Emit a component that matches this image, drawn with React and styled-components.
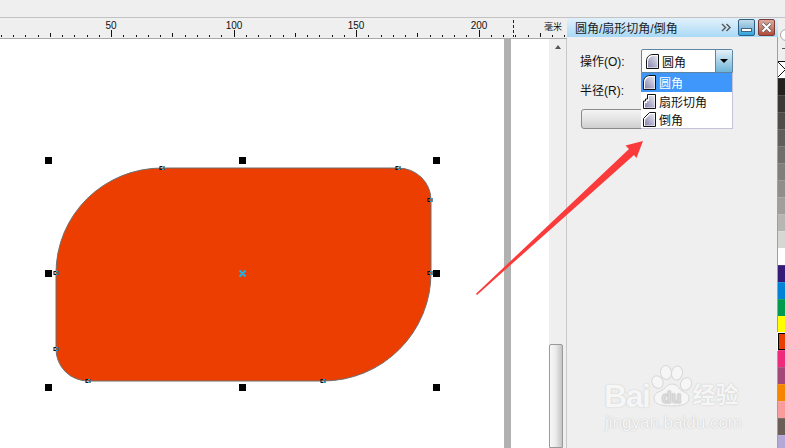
import React from 'react'
import styled, { createGlobalStyle } from 'styled-components'

const GlobalStyle = createGlobalStyle`
  html, body {
    margin: 0;
    padding: 0;
    background: #efefef;
  }
`

const UI_FONT = `"Liberation Sans", "Noto Sans CJK SC", sans-serif`

const Screen = styled.div`
  position: relative;
  width: 785px;
  height: 448px;
  overflow: hidden;
  display: flex;
  flex-direction: column;
  background: #efefef;
  font-family: ${UI_FONT};
  font-size: 12px;
  color: #111;
`

const TopBar = styled.div`
  height: 17px;
  flex-shrink: 0;
  border-bottom: 1px solid #c2c2c2;
`

const Main = styled.div`
  flex: 1;
  display: flex;
  min-height: 0;
`

const Workspace = styled.div`
  width: 567px;
  display: flex;
  flex-direction: column;
  flex-shrink: 0;
`

const RulerBar = styled.div`
  height: 20px;
  flex-shrink: 0;
  border-bottom: 1px solid #a9a9a9;
  svg {
    display: block;
  }
`

const CanvasRow = styled.div`
  flex: 1;
  display: flex;
  min-height: 0;
`

const Canvas = styled.div`
  width: 504px;
  background: #fff;
  svg {
    display: block;
  }
`

const PageEdge = styled.div`
  width: 7px;
  background: #b1b1b1;
`

const Pasteboard = styled.div`
  width: 38px;
  background: #fff;
`

const ScrollTrack = styled.div`
  width: 17px;
  display: flex;
  flex-direction: column;
  align-items: flex-start;
  background: #efefef;
  border-right: 1px solid #c8c8c8;
`

const ScrollUp = styled.div`
  width: 0;
  height: 0;
  margin: 6px 0 0 6px;
  border-left: 3px solid transparent;
  border-right: 3px solid transparent;
  border-bottom: 4px solid #555;
`

const ScrollThumb = styled.div`
  width: 14px;
  height: 130px;
  margin-top: 295px;
  box-sizing: border-box;
  border: 1px solid #9a9a9a;
  border-radius: 2px 2px 0 0;
  background: linear-gradient(90deg, #f7f7f7 0%, #ececec 45%, #c4c4c8 100%);
`

const Panel = styled.div`
  position: relative;
  width: 211px;
  flex-shrink: 0;
  display: flex;
  flex-direction: column;
`

const PanelHeader = styled.div`
  height: 19px;
  display: flex;
  align-items: center;
  padding: 0 3px 0 8px;
  background: linear-gradient(180deg, #e2f1fb 0%, #c8e6f9 50%, #a8d9f6 100%);
`

const PanelTitle = styled.div`
  flex: 1;
  font-size: 12px;
  color: #1c1c1c;
  white-space: nowrap;
`

const ExpandGlyph = styled.svg`
  width: 10px;
  height: 9px;
  margin-right: 7px;
`

const WindowButton = styled.div`
  width: 17px;
  height: 17px;
  box-sizing: border-box;
  margin-left: ${props => props.$gap}px;
  display: flex;
  align-items: center;
  justify-content: center;
  border-radius: 2px;
  border: 1px solid ${props => (props.$danger ? '#7d3a32' : '#2f5f82')};
  background: ${props => (props.$danger
    ? 'linear-gradient(180deg, #d8a89c 0%, #c98374 50%, #b0483a 100%)'
    : 'linear-gradient(180deg, #c4dbe9 0%, #86bcdc 55%, #28a6e2 100%)')};
`

const MinimizeBar = styled.div`
  width: 11px;
  height: 4px;
  box-sizing: border-box;
  background: #fff;
  border: 1px solid #45657c;
  margin-top: 5px;
`

const PanelBody = styled.div`
  flex: 1;
  display: flex;
  flex-direction: column;
  padding: 12px 0 0 13px;
`

const FieldRow = styled.div`
  display: flex;
  align-items: center;
  height: ${props => props.$height}px;
  margin-bottom: ${props => props.$gap}px;
`

const FieldLabel = styled.div`
  width: 61px;
  flex-shrink: 0;
  padding-bottom: 2px;
  font-size: 12px;
  white-space: nowrap;
`

const Combo = styled.div`
  position: relative;
  width: 92px;
  height: 24px;
  box-sizing: border-box;
  display: flex;
  background: #fff;
  border: 1px solid #5e86a3;
  border-radius: 2px 2px 0 0;
`

const ComboValue = styled.div`
  flex: 1;
  display: flex;
  align-items: center;
  gap: 2px;
  padding-left: 3px;
`

const ComboArrow = styled.div`
  width: 16px;
  display: flex;
  align-items: center;
  justify-content: center;
  border-left: 1px solid #5e86a3;
  background: linear-gradient(180deg, #e5f1f8 0%, #a8d2e8 50%, #6fb4d8 100%);
  &::after {
    content: '';
    width: 0;
    height: 0;
    border-left: 4px solid transparent;
    border-right: 4px solid transparent;
    border-top: 4px solid #000;
  }
`

const DropList = styled.div`
  position: absolute;
  left: -1px;
  top: 100%;
  margin-top: 1px;
  width: 92px;
  box-sizing: border-box;
  background: #fff;
  border: 1px solid #c4c4d8;
  border-top: none;
  border-left: none;
  z-index: 2;
`

const DropRow = styled.div`
  height: ${props => (props.$selected ? 19 : 18)}px;
  display: flex;
  align-items: center;
  gap: 2px;
  padding-left: 1px;
  background: ${props => (props.$selected ? '#3f97fb' : 'transparent')};
  color: ${props => (props.$selected ? '#fff' : '#111')};
  white-space: nowrap;
`

const ApplyButton = styled.div`
  width: 151px;
  height: 20px;
  margin-left: 1px;
  box-sizing: border-box;
  border: 1px solid #8a8a8a;
  border-radius: 3px;
  background: linear-gradient(180deg, #f4f4f4 0%, #e4e4e4 50%, #cfcfcf 100%);
`

const Watermark = styled.div`
  position: absolute;
  left: 37px;
  top: 345px;
  width: 141px;
  display: flex;
  flex-direction: column;
  color: #f6f6f6;
  text-shadow: 0 0 1px #c6c6c6, 0 0 2px #d8d8d8;
  pointer-events: none;
`

const BrandRow = styled.div`
  display: flex;
  align-items: flex-end;
  height: 44px;
`

const BrandWord = styled.div`
  font-size: 32px;
  line-height: 32px;
  font-weight: 700;
  letter-spacing: -1.4px;
  margin-bottom: -5px;
`

const BrandPaw = styled.svg`
  width: 44px;
  height: 42px;
  flex-shrink: 0;
`

const BrandTail = styled.div`
  font-size: 23px;
  line-height: 23px;
  font-weight: 700;
  margin: 0 0 0 -1px;
  white-space: nowrap;
`

const BrandDomain = styled.div`
  font-size: 17px;
  line-height: 20px;
  margin: 6px 0 0 1px;
  white-space: nowrap;
`

const Palette = styled.div`
  width: 7px;
  flex-shrink: 0;
  display: flex;
  flex-direction: column;
  border-left: 1px solid #a0a0a0;
  margin-left: -1px;
`

const PaletteTop = styled.div`
  height: 43px;
  flex-shrink: 0;
  display: flex;
  flex-direction: column;
  padding-left: 2px;
`

const PaletteKnob = styled.div`
  width: 10px;
  height: 10px;
  margin-top: 11px;
  border-radius: 50%;
  border: 1px solid #a6a6a6;
  background: #fff;
`

const PaletteNotch = styled.div`
  width: 3px;
  height: 1px;
  margin: 7px 0 0 2px;
  background: #555;
`

const PaletteNone = styled.svg`
  width: 7px;
  height: 17px;
  display: block;
  flex-shrink: 0;
  background: #fff;
`

const Swatch = styled.div`
  height: 17px;
  flex-shrink: 0;
  box-sizing: border-box;
  background: ${props => props.$color};
  border-top: 1px solid rgba(255, 255, 255, 0.12);
  ${props => props.$picked && `
    border: 1px solid #000;
    border-right: none;
    outline: 1px solid #fff;
  `}
`

const ArrowOverlay = styled.svg`
  position: absolute;
  left: 0;
  top: 0;
  width: 785px;
  height: 448px;
  pointer-events: none;
  z-index: 5;
`

const SWATCHES = [
  '#23211f', '#3b3937', '#4f4d4b', '#5f5e5c', '#6f6e6c', '#807f7d', '#8f8e8c',
  '#a09f9d', '#b7b6b4', '#d6d6d4', '#ffffff', '#361a78', '#0083d7', '#009a4e',
  '#ffff00', '#ec3e00', '#ef2c7c', '#a4487a', '#f68500', '#fb9c9c', '#6b5e57',
  '#b3a8d6',
]

const CORNER_PATHS = {
  round: 'M1.5 15.5V8C1.5 4 4.5 1.5 8 1.5H13.5V15.5Z',
  scallop: 'M1.5 15.5V8H3.5V6H5.5V1.5H13.5V15.5Z',
  chamfer: 'M1.5 15.5V7.5L7.5 1.5H13.5V15.5Z',
}

const CORNER_INNER = {
  round: 'M3 14.5V9C3 5.5 5.5 3 9 3H12.5V14.5Z',
  scallop: 'M3 14.5V10H5V8H7V3H12.5V14.5Z',
  chamfer: 'M3 14.5V8.5L8.5 3H12.5V14.5Z',
}

const CornerIcon = ({ kind }) => (
  <svg width="15" height="17" viewBox="0 0 15 17" style={{ flexShrink: 0 }}>
    <defs>
      <linearGradient id={`corner-${kind}`} x1="1" y1="0" x2="0" y2="1">
        <stop offset="0" stopColor="#e6e6f0" />
        <stop offset="1" stopColor="#8784ae" />
      </linearGradient>
    </defs>
    <path d={CORNER_PATHS[kind]} fill="#fff" stroke="#111" />
    <path d={CORNER_INNER[kind]} fill={`url(#corner-${kind})`} />
  </svg>
)

const rulerTicks = () => {
  const ticks = []
  for (let k = -9; k <= 37; k++) {
    const x = Math.round(111 + 12.25 * k) + 0.5
    const top = k % 10 === 0 ? 12 : k % 5 === 0 ? 15 : 17
    ticks.push(<line key={k} x1={x} x2={x} y1={top} y2={19} stroke="#111" />)
  }
  return ticks
}

const Ruler = () => (
  <RulerBar>
    <svg width="567" height="19" viewBox="0 0 567 19">
      {rulerTicks()}
      {[[111, '50'], [234, '100'], [356, '150'], [479, '200']].map(([x, label]) => (
        <text key={label} x={x} y={11} textAnchor="middle" fontSize="10" fontFamily={UI_FONT} fill="#111">
          {label}
        </text>
      ))}
      <line x1="513.5" x2="513.5" y1="2" y2="19" stroke="#222" strokeDasharray="3 2" />
      <text x="544" y="12" fontSize="9" fontFamily={UI_FONT} fill="#111">毫米</text>
    </svg>
  </RulerBar>
)

const HANDLES = [45, 239, 433].flatMap(x => [157, 270, 384].map(y => [x, y]))
  .filter(([x, y]) => !(x === 239 && y === 270))

const NODES = [
  [162, 168], [398, 168], [430, 200], [430, 273],
  [323, 381], [88, 381], [56, 349], [56, 273],
]

const Drawing = () => (
  <svg width="504" height="409" viewBox="0 39 504 409">
    <path
      d="M162 168H398A33 32 0 0 1 431 200V273A108 108 0 0 1 323 381H88A32 32 0 0 1 56 349V273A106 105 0 0 1 162 168Z"
      fill="#ec3e00"
      stroke="#6f6f6f"
    />
    {HANDLES.map(([x, y]) => <rect key={`${x}-${y}`} x={x} y={y} width="7" height="7" fill="#000" />)}
    {NODES.map(([x, y]) => (
      <g key={`${x}-${y}`}>
        <rect x={x - 2} y={y - 1.5} width="4" height="3" fill="none" stroke="#111" />
        <path d={`M${x} ${y - 1.5}H${x + 2}V${y + 1.5}H${x}`} fill="none" stroke="#27a3d6" />
      </g>
    ))}
    <path d="M239.5 270.5L245.5 276.5M245.5 270.5L239.5 276.5" stroke="#18b4ec" strokeWidth="2" />
  </svg>
)

const PawLogo = () => (
  <BrandPaw viewBox="0 0 44 42">
    <g fill="#f6f6f6" stroke="#d8d8d8" strokeWidth="1">
      <ellipse cx="7.5" cy="17" rx="5.5" ry="6.5" transform="rotate(-25 7.5 17)" />
      <ellipse cx="16" cy="7.5" rx="5.5" ry="7" transform="rotate(-8 16 7.5)" />
      <ellipse cx="27" cy="8" rx="5.5" ry="7" transform="rotate(10 27 8)" />
      <ellipse cx="36" cy="19" rx="5.5" ry="6.5" transform="rotate(25 36 19)" />
      <path d="M4 33C4 26 13 27 16 22C19 18 26 18 29 23C32 28 40 27 39 34C38 40 30 41 22 41C13 41 4 40 4 33Z" />
    </g>
    <text x="21.5" y="38" textAnchor="middle" fontSize="16" fontWeight="700" fontFamily={UI_FONT} fill="#e6e6e6" stroke="#d2d2d2" strokeWidth="0.5">du</text>
  </BrandPaw>
)

const CornerPanel = () => (
  <Panel>
    <PanelHeader>
      <PanelTitle>圆角/扇形切角/倒角</PanelTitle>
      <ExpandGlyph viewBox="0 0 10 9">
        <path d="M1 1L4.5 4.5L1 8M5.5 1L9 4.5L5.5 8" fill="none" stroke="#555" strokeWidth="1.4" />
      </ExpandGlyph>
      <WindowButton $gap={0}><MinimizeBar /></WindowButton>
      <WindowButton $gap={3} $danger>
        <svg width="13" height="11" viewBox="0 0 13 11">
          <path d="M2.5 1.5L10.5 9.5M10.5 1.5L2.5 9.5" stroke="#555" strokeWidth="3.4" />
          <path d="M2.5 1.5L10.5 9.5M10.5 1.5L2.5 9.5" stroke="#fff" strokeWidth="2.2" />
        </svg>
      </WindowButton>
    </PanelHeader>
    <PanelBody>
      <FieldRow $height={24} $gap={7}>
        <FieldLabel>操作(O):</FieldLabel>
        <Combo>
          <ComboValue><CornerIcon kind="round" />圆角</ComboValue>
          <ComboArrow />
          <DropList>
            <DropRow $selected><CornerIcon kind="round" />圆角</DropRow>
            <DropRow><CornerIcon kind="scallop" />扇形切角</DropRow>
            <DropRow><CornerIcon kind="chamfer" />倒角</DropRow>
          </DropList>
        </Combo>
      </FieldRow>
      <FieldRow $height={20} $gap={9}>
        <FieldLabel>半径(R):</FieldLabel>
      </FieldRow>
      <ApplyButton />
    </PanelBody>
    <Watermark>
      <BrandRow>
        <BrandWord>Bai</BrandWord>
        <PawLogo />
        <BrandTail>经验</BrandTail>
      </BrandRow>
      <BrandDomain>jingyan.baidu.com</BrandDomain>
    </Watermark>
  </Panel>
)

const ColorPalette = () => (
  <Palette>
    <PaletteTop><PaletteKnob /><PaletteNotch /></PaletteTop>
    <PaletteNone viewBox="0 0 7 17">
      <path d="M0 0.5H7M0 1L7 8M0 16L7 9" stroke="#111" fill="none" />
    </PaletteNone>
    {SWATCHES.map(color => <Swatch key={color} $color={color} $picked={color === '#ec3e00'} />)}
  </Palette>
)

export default function App () {
  return (
    <Screen>
      <GlobalStyle />
      <TopBar />
      <Main>
        <Workspace>
          <Ruler />
          <CanvasRow>
            <Canvas><Drawing /></Canvas>
            <PageEdge />
            <Pasteboard />
            <ScrollTrack>
              <ScrollUp />
              <ScrollThumb />
            </ScrollTrack>
          </CanvasRow>
        </Workspace>
        <CornerPanel />
        <ColorPalette />
      </Main>
      <ArrowOverlay viewBox="0 0 785 448">
        <polygon points="476,293.8 629,149 625.5,145.5 643,141 636.5,158 634,155 477,295" fill="#fb3b3b" />
      </ArrowOverlay>
    </Screen>
  )
}
